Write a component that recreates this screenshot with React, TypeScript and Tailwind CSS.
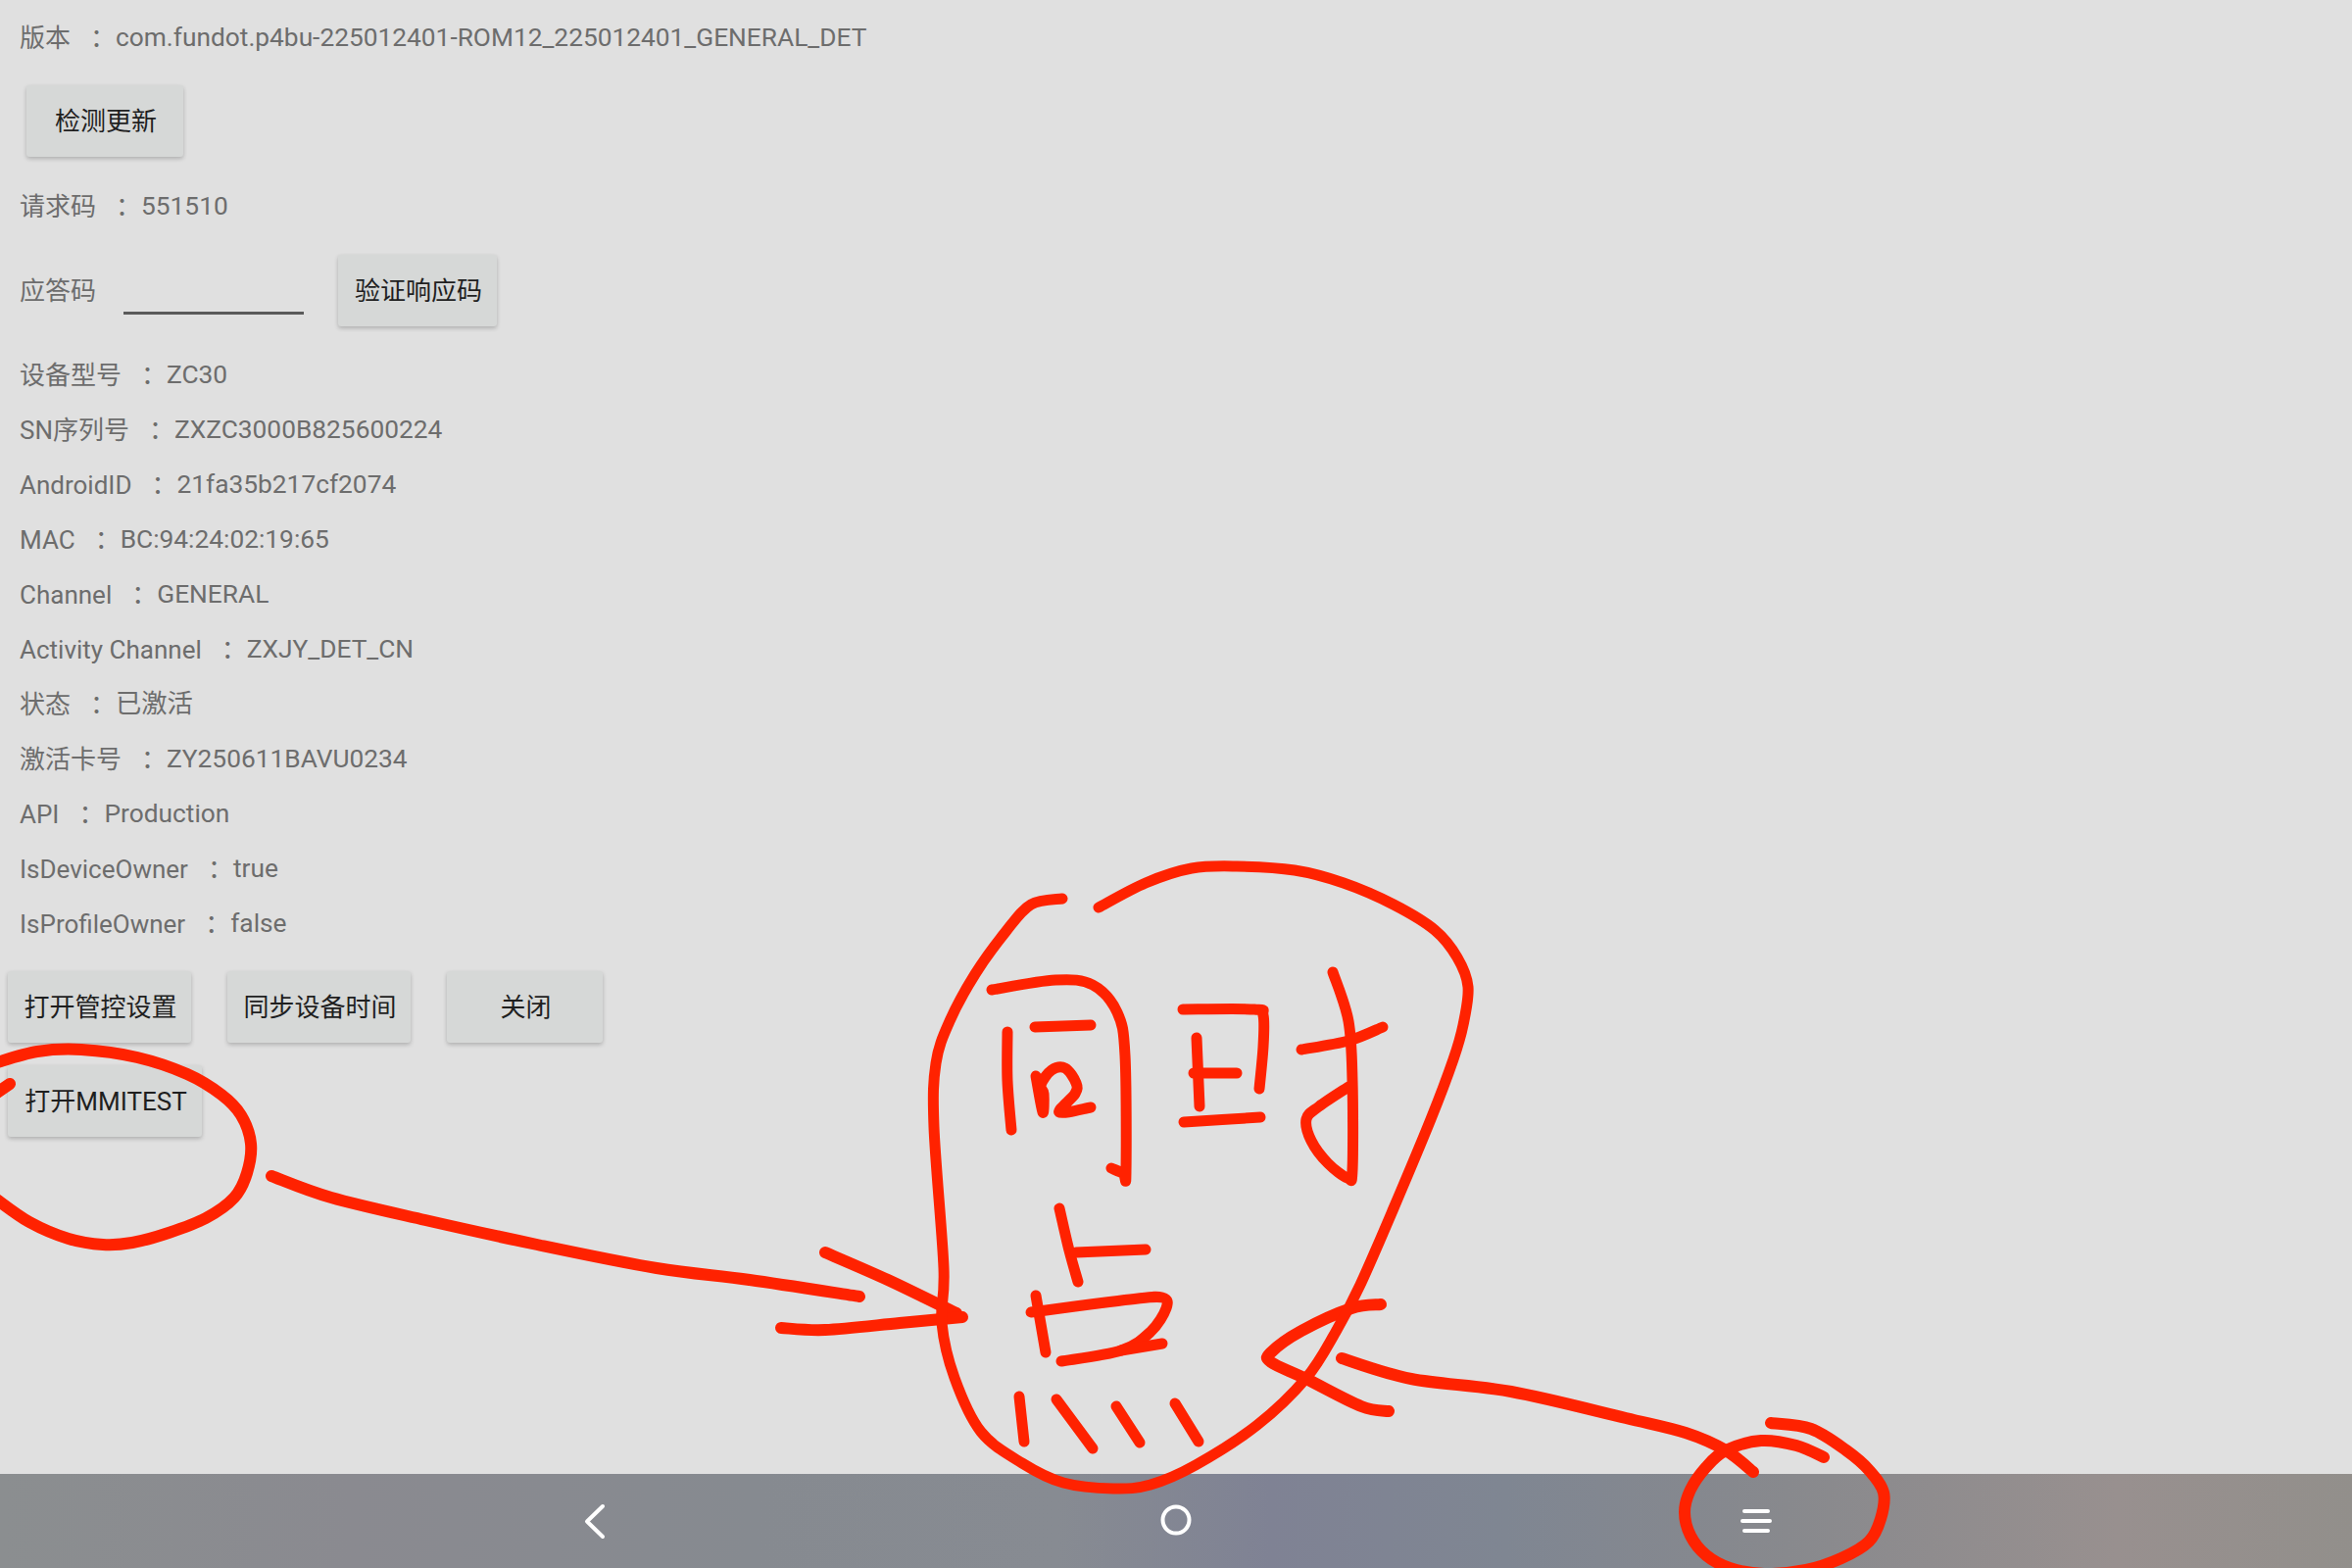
import React from "react";

type Pt = [number, number];

function smooth(pts: Pt[]): string {
  let d = `M${pts[0][0]} ${pts[0][1]}`;
  for (let i = 0; i < pts.length - 1; i++) {
    const p0 = pts[Math.max(0, i - 1)];
    const p1 = pts[i];
    const p2 = pts[i + 1];
    const p3 = pts[Math.min(pts.length - 1, i + 2)];
    const c1x = p1[0] + (p2[0] - p0[0]) / 6;
    const c1y = p1[1] + (p2[1] - p0[1]) / 6;
    const c2x = p2[0] - (p3[0] - p1[0]) / 6;
    const c2y = p2[1] - (p3[1] - p1[1]) / 6;
    d += ` C${c1x.toFixed(1)} ${c1y.toFixed(1)} ${c2x.toFixed(1)} ${c2y.toFixed(1)} ${p2[0]} ${p2[1]}`;
  }
  return d;
}

const thick: Pt[][] = [
  [[-6,1085],[38,1073],[83,1071],[140,1079],[191,1096],[226,1117],[246,1138],[256,1167],[252,1197],[239,1222],[210,1243],[172,1258],[135,1268],[105,1270],[70,1264],[30,1247],[-6,1222]],
  [[10,1106],[-6,1117]],
  [[277,1200],[338,1222],[434,1245],[548,1270],[670,1294],[765,1306],[877,1323]],
  [[842,1278],[906,1306],[976,1340]],
  [[797,1355],[842,1357],[918,1350],[982,1344]],
  [[1409,1331],[1379,1335],[1328,1358],[1297,1380],[1297,1390],[1333,1407],[1389,1435],[1417,1440]],
  [[1369,1386],[1440,1407],[1542,1420],[1659,1447],[1720,1462],[1761,1480],[1789,1502]],
  [[1807,1452],[1848,1458],[1884,1480],[1907,1500],[1922,1523],[1919,1550],[1907,1573],[1879,1590],[1843,1602],[1800,1606],[1765,1600],[1741,1587],[1725,1567],[1719,1543],[1725,1520],[1741,1497],[1761,1480],[1797,1470],[1833,1475],[1861,1487]],
];

const thin: Pt[][] = [
  [[1121,926],[1169,901],[1216,886],[1262,884],[1321,888],[1371,901],[1422,923],[1464,949],[1487,977],[1498,1007],[1493,1046],[1483,1081],[1460,1142],[1422,1233],[1388,1311],[1363,1359],[1333,1406],[1283,1454],[1220,1495],[1174,1515],[1136,1519],[1085,1513],[1043,1493],[1001,1461],[974,1406],[961,1350],[963,1294],[953,1150],[955,1085],[969,1042],[995,994],[1026,951],[1052,923],[1084,917]],
  [[1012,1010],[1077,1000],[1115,1005],[1140,1033],[1148,1077],[1149,1196],[1146,1197],[1134,1192]],
  [[1028,1053],[1028,1103],[1032,1153]],
  [[1056,1048],[1113,1046]],
  [[1057,1098],[1064,1135],[1065,1116],[1062,1107],[1073,1092],[1087,1090],[1098,1105],[1097,1116],[1081,1135],[1113,1130]],
  [[1207,1030],[1280,1030],[1289,1036],[1289,1068],[1285,1111]],
  [[1221,1059],[1224,1129]],
  [[1218,1095],[1262,1095]],
  [[1208,1145],[1286,1140]],
  [[1360,992],[1376,1042],[1380,1103],[1380,1194],[1375,1202],[1355,1187],[1338,1164],[1333,1142],[1346,1129],[1376,1109]],
  [[1328,1071],[1376,1062],[1411,1048]],
  [[1081,1233],[1091,1276],[1100,1308]],
  [[1098,1278],[1169,1275]],
  [[1057,1322],[1067,1380]],
  [[1052,1339],[1153,1326],[1186,1324],[1190,1335],[1174,1359],[1144,1378],[1083,1389]],
  [[1144,1378],[1186,1371]],
  [[1040,1425],[1045,1471]],
  [[1078,1428],[1115,1478]],
  [[1139,1435],[1163,1472]],
  [[1199,1432],[1223,1471]],
];

const font = "font-['Roboto','Noto_Sans_CJK_SC',sans-serif]";

function Btn({ w, children }: { w: string; children: React.ReactNode }) {
  return (
    <button className={`${w} h-[73px] flex items-center justify-center pt-[2px] pl-[2px] rounded-[3px] bg-[#d6d8d7] text-[26px] text-[#1f1f1f] shadow-[0_2px_4px_rgba(0,0,0,0.22)]`}>
      {children}
    </button>
  );
}

function Row({ label, value }: { label: string; value: string }) {
  return (
    <div className="h-[56px] flex items-center pl-[20px] text-[26px] text-[#6d6d6d] whitespace-pre">
      <span>{label}</span>
      <span className="ml-[20px]">：</span>
      <span className="text-[26.3px]">{value}</span>
    </div>
  );
}

export default function App() {
  const rows: [string, string][] = [
    ["设备型号", "ZC30"],
    ["SN序列号", "ZXZC3000B825600224"],
    ["AndroidID", "21fa35b217cf2074"],
    ["MAC", "BC:94:24:02:19:65"],
    ["Channel", "GENERAL"],
    ["Activity Channel", "ZXJY_DET_CN"],
    ["状态", "已激活"],
    ["激活卡号", "ZY250611BAVU0234"],
    ["API", "Production"],
    ["IsDeviceOwner", "true"],
    ["IsProfileOwner", "false"],
  ];
  return (
    <div className={`relative w-[2400px] h-[1600px] overflow-hidden flex flex-col bg-[#e0e0e0] ${font}`}>
      <main className="flex-1 flex flex-col pt-[11px]">
        <Row label="版本" value="com.fundot.p4bu-225012401-ROM12_225012401_GENERAL_DET" />
        <div className="mt-[20px] pl-[27px]">
          <Btn w="w-[160px]">检测更新</Btn>
        </div>
        <div className="mt-[23px]">
          <Row label="请求码" value="551510" />
        </div>
        <div className="mt-[21px] h-[73px] flex items-center pl-[20px]">
          <span className="text-[26px] text-[#6d6d6d] pt-[2px]">应答码</span>
          <div className="ml-[28px] mt-[46px] w-[184px] h-[3px] bg-[#5a5a5a]" />
          <div className="ml-[35px]">
            <Btn w="w-[162px]">验证响应码</Btn>
          </div>
        </div>
        <div className="mt-[22px] flex flex-col">
          {rows.map(([l, v]) => (
            <Row key={l} label={l} value={v} />
          ))}
        </div>
        <div className="mt-[20px] pl-[8px] flex gap-[37px]">
          <Btn w="w-[187px]">打开管控设置</Btn>
          <Btn w="w-[187px]">同步设备时间</Btn>
          <Btn w="w-[159px]">关闭</Btn>
        </div>
        <div className="mt-[23px] pl-[8px]">
          <Btn w="w-[198px]">打开MMITEST</Btn>
        </div>
      </main>
      <nav className="h-[96px] shrink-0 grid grid-cols-3 items-center justify-items-center px-[312px] bg-[linear-gradient(90deg,#8b8e90_0%,#8a8a90_15%,#868a90_32%,#878b92_45%,#7f8294_54%,#7f8692_64%,#88898d_76%,#98908f_90%,#928f8b_100%)]">
        <svg width="24" height="38" viewBox="0 0 24 38" fill="none" stroke="#fff" strokeWidth="4" strokeLinecap="round" strokeLinejoin="round">
          <path d="M19 4 L3 19.5 L19 35" />
        </svg>
        <svg className="-mt-[2px]" width="34" height="34" viewBox="0 0 34 34" fill="none" stroke="#fff" strokeWidth="4">
          <circle cx="17" cy="17" r="13.5" />
        </svg>
        <svg width="36" height="26" viewBox="0 0 36 26" fill="none" stroke="#fff" strokeWidth="4" strokeLinecap="round">
          <path d="M6 3 H30 M4 13 H32 M6 23 H30" />
        </svg>
      </nav>
      <svg className="absolute inset-0 pointer-events-none" width="2400" height="1600" viewBox="0 0 2400 1600" fill="none" stroke="#ff2200" strokeLinecap="round" strokeLinejoin="round">
        {thick.map((p, i) => (
          <path key={i} d={smooth(p)} strokeWidth="12" />
        ))}
        {thin.map((p, i) => (
          <path key={i} d={smooth(p)} strokeWidth="11" />
        ))}
      </svg>
    </div>
  );
}
